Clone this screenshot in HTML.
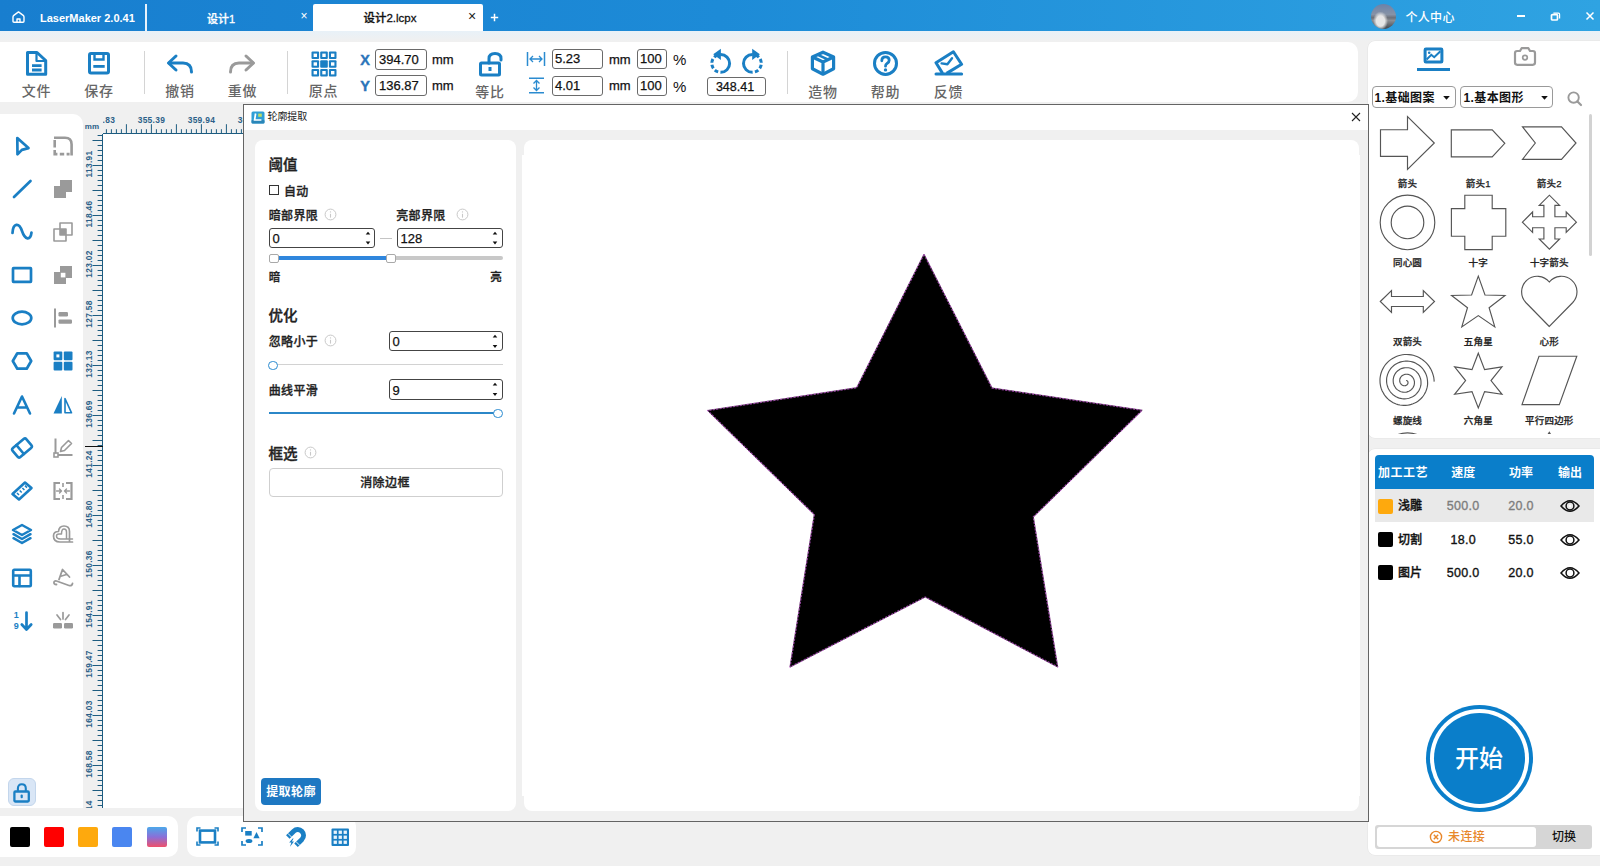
<!DOCTYPE html><html lang="zh"><head><meta charset="utf-8"><title>LaserMaker</title><style>
*{box-sizing:border-box;margin:0;padding:0}
html,body{width:1600px;height:866px;overflow:hidden;background:#f0f0f0;font-family:"Liberation Sans","Noto Sans CJK SC",sans-serif;color:#111}
.a{position:absolute;display:block}
.c{position:absolute;white-space:nowrap;transform:translate(-50%,-50%);line-height:1}
.l{position:absolute;white-space:nowrap;transform:translate(0,-50%);line-height:1}
.w{background:#fff}
.tl{font-size:14px;color:#666;letter-spacing:.7px;font-weight:500}
.inp{-webkit-text-stroke:.25px #111;position:absolute;border:1px solid #6a6a6a;border-radius:3px;background:#fff;font-size:13px;line-height:1;padding-left:3px;display:flex;align-items:center;color:#111}
.mm{font-size:13px;color:#111;-webkit-text-stroke:.25px #111}
.sb{font-size:12px;font-weight:bold;color:#111}
.shl{font-size:9.5px;font-weight:500;-webkit-text-stroke:.25px #222;color:#222;letter-spacing:.2px}
.th{font-size:12px;font-weight:bold;color:#fff}
.td{font-size:12px;font-weight:500;-webkit-text-stroke:.35px currentColor;color:#111}
.f12{font-size:12px;font-weight:500;-webkit-text-stroke:.3px #222;color:#222;letter-spacing:.3px}
.f14{font-size:14.5px;font-weight:500;-webkit-text-stroke:.35px #222;color:#222}
.rl{font-size:8.4px;font-weight:bold;color:#2b5f88;letter-spacing:.3px}
</style></head><body>
<div class="a" style="left:0;top:0;width:1600px;height:31px;background:linear-gradient(90deg,#187ecf 0%,#1d8bd7 45%,#2fa3e2 100%)"></div>
<div class="a" style="left:0;top:31px;width:1600px;height:10px;background:linear-gradient(180deg,#e8f1f8,#f0f0f0)"></div>
<svg class="a" style="left:11px;top:9px" width="15" height="15" viewBox="0 0 15 15" ><path d="M2 8 Q2 7 2.8 6.4 L7.5 2.9 L12.2 6.4 Q13 7 13 8 V12.2 Q13 13.2 12 13.2 H3 Q2 13.2 2 12.2 Z M6 13 V10 H9 V13" fill="none" stroke="#fff" stroke-width="1.4" stroke-linejoin="round"/></svg>
<span class="l " style="left:40px;top:18px;font-size:11px;color:#fff;font-weight:bold;letter-spacing:0">LaserMaker 2.0.41</span>
<div class="a" style="left:145px;top:4px;width:2px;height:27px;background:#e8f2fb"></div>
<span class="c " style="left:221px;top:18.6px;font-size:11px;color:#fff;font-weight:500;-webkit-text-stroke:.3px #fff">设计1</span>
<span class="c " style="left:304px;top:15.5px;font-size:12px;color:#fff">×</span>
<div class="a w" style="left:313px;top:4px;width:170px;height:27px;border-radius:2px 2px 0 0"></div>
<span class="c " style="left:390px;top:18.6px;font-size:11.5px;color:#111;font-weight:500;-webkit-text-stroke:.3px #111">设计2.lcpx</span>
<span class="c " style="left:472px;top:15.5px;font-size:14px;color:#222">×</span>
<svg class="a" style="left:489.5px;top:12.5px" width="9" height="9" viewBox="0 0 9 9" ><path d="M4.5 0.8 V8.2 M0.8 4.5 H8.2" stroke="#fff" stroke-width="1.5"/></svg>
<div class="a" style="left:1371px;top:4px;width:25px;height:25px;border-radius:13px;background:radial-gradient(ellipse 30% 38% at 38% 68%,#e6e6e6 0 55%,rgba(230,230,230,0) 100%),linear-gradient(180deg,#6b82aa 0%,#8793a6 42%,#6c7078 55%,#8a8e94 66%,#3f444b 100%)"></div>
<span class="l " style="left:1405.5px;top:17.8px;font-size:12px;color:#fff;font-weight:500;letter-spacing:.3px">个人中心</span>
<div class="a" style="left:1517.3px;top:15.3px;width:7.8px;height:1.6px;background:#fff"></div>
<svg class="a" style="left:1550px;top:11.5px" width="11" height="10" viewBox="0 0 11 10" ><rect x="1.5" y="2.6" width="6" height="5.4" rx="1" fill="none" stroke="#fff" stroke-width="1.7"/><path d="M3.4 1.2 H8.4 Q9.6 1.2 9.6 2.4 V6.6" fill="none" stroke="#fff" stroke-width="1.2"/></svg>
<svg class="a" style="left:1584.6px;top:11.4px" width="10" height="10" viewBox="0 0 10 10" ><path d="M1.5 1.5 L8.5 8.5 M8.5 1.5 L1.5 8.5" stroke="#fff" stroke-width="1.5"/></svg>
<div class="a w" style="left:-10px;top:42px;width:1368px;height:60px;border-radius:10px"></div>
<svg class="a" style="left:24px;top:49px" width="26" height="29" viewBox="0 0 26 29" ><path d="M3.5 3.5 H13 L21.7 11.5 V25.2 H3.5 Z" fill="none" stroke="#1a7fc4" stroke-width="3" stroke-linejoin="round"/><path d="M12.5 3.5 V12 H21.7" fill="none" stroke="#1a7fc4" stroke-width="2.2" stroke-linejoin="round"/><path d="M8 16.6 H17.6 M8 21 H17.6" stroke="#1a7fc4" stroke-width="2.8"/></svg>
<span class="c tl" style="left:36.5px;top:91.1px;">文件</span>
<svg class="a" style="left:86px;top:50px" width="26" height="27" viewBox="0 0 26 27" ><rect x="3.5" y="3.5" width="19" height="19.5" rx="1.5" fill="none" stroke="#1a7fc4" stroke-width="3"/><path d="M8.5 3.5 V9.5 H17.5 V3.5" fill="none" stroke="#1a7fc4" stroke-width="2.4"/><path d="M7.3 16.4 H18.7" stroke="#1a7fc4" stroke-width="2.8"/></svg>
<span class="c tl" style="left:99px;top:91.1px;">保存</span>
<div class="a" style="left:143.5px;top:51px;width:1.5px;height:43px;background:#d4d4d4"></div>
<svg class="a" style="left:165px;top:52px" width="30" height="24" viewBox="0 0 30 24" ><path d="M11 4 L3.5 11 L11 18" fill="none" stroke="#1a7fc4" stroke-width="3" stroke-linecap="round" stroke-linejoin="round"/><path d="M4 11 H18 Q26.5 11 26.5 20" fill="none" stroke="#1a7fc4" stroke-width="3" stroke-linecap="round"/></svg>
<span class="c tl" style="left:180px;top:91.1px;">撤销</span>
<svg class="a" style="left:227px;top:52px" width="30" height="24" viewBox="0 0 30 24" ><path d="M19 4 L26.5 11 L19 18" fill="none" stroke="#9a9a9a" stroke-width="3" stroke-linecap="round" stroke-linejoin="round"/><path d="M26 11 H12 Q3.5 11 3.5 20" fill="none" stroke="#9a9a9a" stroke-width="3" stroke-linecap="round"/></svg>
<span class="c tl" style="left:242.5px;top:91.1px;">重做</span>
<div class="a" style="left:286.5px;top:51px;width:1.5px;height:43px;background:#d4d4d4"></div>
<svg class="a" style="left:311px;top:50.6px" width="26" height="26" viewBox="0 0 26 26" ><rect x="0.50" y="0.50" width="7.6" height="7.6" rx="1" fill="#1a7fc4"/><rect x="2.60" y="2.60" width="3.4" height="3.4" fill="#fff"/><rect x="9.20" y="0.50" width="7.6" height="7.6" rx="1" fill="#1a7fc4"/><rect x="11.30" y="2.60" width="3.4" height="3.4" fill="#fff"/><rect x="17.90" y="0.50" width="7.6" height="7.6" rx="1" fill="#1a7fc4"/><rect x="20.00" y="2.60" width="3.4" height="3.4" fill="#fff"/><rect x="0.50" y="9.20" width="7.6" height="7.6" rx="1" fill="#1a7fc4"/><rect x="2.60" y="11.30" width="3.4" height="3.4" fill="#fff"/><rect x="9.20" y="9.20" width="7.6" height="7.6" rx="1" fill="#1a7fc4"/><rect x="17.90" y="9.20" width="7.6" height="7.6" rx="1" fill="#1a7fc4"/><rect x="20.00" y="11.30" width="3.4" height="3.4" fill="#fff"/><rect x="0.50" y="17.90" width="7.6" height="7.6" rx="1" fill="#1a7fc4"/><rect x="2.60" y="20.00" width="3.4" height="3.4" fill="#fff"/><rect x="9.20" y="17.90" width="7.6" height="7.6" rx="1" fill="#1a7fc4"/><rect x="11.30" y="20.00" width="3.4" height="3.4" fill="#fff"/><rect x="17.90" y="17.90" width="7.6" height="7.6" rx="1" fill="#1a7fc4"/><rect x="20.00" y="20.00" width="3.4" height="3.4" fill="#fff"/></svg>
<span class="c tl" style="left:323.5px;top:91.1px;">原点</span>
<span class="c " style="left:365px;top:60px;font-size:14.5px;font-weight:bold;color:#2b74b9;-webkit-text-stroke:.4px #2b74b9">X</span>
<span class="c " style="left:365px;top:86px;font-size:14.5px;font-weight:bold;color:#2b74b9;-webkit-text-stroke:.4px #2b74b9">Y</span>
<div class="inp" style="left:375px;top:49px;width:52px;height:21px">394.70</div>
<div class="inp" style="left:375px;top:75px;width:52px;height:21px">136.87</div>
<span class="l mm" style="left:432px;top:59.2px;">mm</span>
<span class="l mm" style="left:432px;top:85.2px;">mm</span>
<svg class="a" style="left:477px;top:50px" width="28" height="28" viewBox="0 0 28 28" ><rect x="3.5" y="13" width="19" height="12" rx="1" fill="none" stroke="#1a7fc4" stroke-width="3"/><path d="M12 13 V8.5 Q12 3.5 18 3.5 Q24 3.5 24 8.5 V10" fill="none" stroke="#1a7fc4" stroke-width="3" stroke-linecap="round"/><rect x="11.5" y="17" width="3" height="4" fill="#1a7fc4"/></svg>
<span class="c tl" style="left:490px;top:91.5px;">等比</span>
<svg class="a" style="left:526px;top:51px" width="20" height="16" viewBox="0 0 20 16" ><path d="M1.5 1 V15 M18.5 1 V15" stroke="#2b8bd0" stroke-width="1.5"/><path d="M4 8 H16 M7 5 L4 8 L7 11 M13 5 L16 8 L13 11" fill="none" stroke="#2b8bd0" stroke-width="1.3"/></svg>
<svg class="a" style="left:528px;top:77px" width="17" height="17" viewBox="0 0 17 17" ><path d="M1 1.2 H16 M1 15.8 H16" stroke="#2b8bd0" stroke-width="1.5"/><path d="M8.5 3.5 V13.5 M5.5 6.5 L8.5 3.5 L11.5 6.5 M5.5 10.5 L8.5 13.5 L11.5 10.5" fill="none" stroke="#2b8bd0" stroke-width="1.3"/></svg>
<div class="inp" style="left:552px;top:48.5px;width:51px;height:20.5px;padding-left:2px">5.23</div>
<div class="inp" style="left:552px;top:75.5px;width:51px;height:20.5px;padding-left:2px">4.01</div>
<span class="l mm" style="left:609px;top:59.2px;">mm</span>
<span class="l mm" style="left:609px;top:85.2px;">mm</span>
<div class="inp" style="left:637px;top:48.5px;width:30px;height:20.5px;padding-left:2px">100</div>
<div class="inp" style="left:637px;top:75.5px;width:30px;height:20.5px;padding-left:2px">100</div>
<span class="l " style="left:673px;top:59.3px;font-size:15px;color:#111">%</span>
<span class="l " style="left:673px;top:85.8px;font-size:15px;color:#111">%</span>
<svg class="a" style="left:708px;top:48px" width="26" height="28" viewBox="0 0 26 28" ><path d="M12.7 24.3 A8.9 8.9 0 0 0 12.7 6.5" fill="none" stroke="#1a7fc4" stroke-width="3"/><path d="M12.7 6.5 A8.9 8.9 0 0 0 12.7 24.3" fill="none" stroke="#1a7fc4" stroke-width="3" stroke-dasharray="3.8 2.2" stroke-dashoffset="-3.4"/><path d="M12.9 0.8 V11.9 L5.2 6.3 Z" fill="#1a7fc4"/></svg>
<svg class="a" style="left:739px;top:48px" width="26" height="28" viewBox="0 0 26 28" ><path d="M13.4 24.3 A8.9 8.9 0 0 1 13.4 6.5" fill="none" stroke="#1a7fc4" stroke-width="3"/><path d="M13.4 6.5 A8.9 8.9 0 0 1 13.4 24.3" fill="none" stroke="#1a7fc4" stroke-width="3" stroke-dasharray="3.8 2.2" stroke-dashoffset="-3.4"/><path d="M13.2 0.8 V11.9 L20.9 6.3 Z" fill="#1a7fc4"/></svg>
<div class="inp" style="left:707.3px;top:77px;width:58.5px;height:19px;justify-content:center;padding:1.5px 3px 0 0;font-size:12.5px">348.41</div>
<div class="a" style="left:786.6px;top:51px;width:1.5px;height:43px;background:#d4d4d4"></div>
<svg class="a" style="left:809px;top:49px" width="28" height="28" viewBox="0 0 28 28" ><path d="M14 3.2 L24.6 8 V19.8 L14 25.2 L3.4 19.8 V8 Z" fill="none" stroke="#1a7fc4" stroke-width="3.2" stroke-linejoin="round"/><path d="M3.4 8 L14 13 L24.6 8 M14 13 V25" fill="none" stroke="#1a7fc4" stroke-width="3.2" stroke-linejoin="round"/><path d="M8.3 5.6 L19.3 10.6" fill="none" stroke="#1a7fc4" stroke-width="2.6" /></svg>
<span class="c tl" style="left:823px;top:91.6px;">造物</span>
<svg class="a" style="left:872px;top:50px" width="27" height="27" viewBox="0 0 27 27" ><circle cx="13.5" cy="13.4" r="11" fill="none" stroke="#1a7fc4" stroke-width="3"/><path d="M9.8 10.8 Q9.8 6.8 13.5 6.8 Q17.2 6.8 17.2 10.3 Q17.2 12.3 15 13.5 Q13.5 14.4 13.5 16.2" fill="none" stroke="#1a7fc4" stroke-width="2.8" stroke-linecap="round"/><circle cx="13.5" cy="19.9" r="1.7" fill="#1a7fc4"/></svg>
<span class="c tl" style="left:885.5px;top:91.6px;">帮助</span>
<svg class="a" style="left:934px;top:49px" width="30" height="28" viewBox="0 0 30 28" ><path d="M8.6 24.4 L2 13.7 L19.4 2.8 L27.6 15.3 L12.6 24.4" fill="none" stroke="#1a7fc4" stroke-width="3" stroke-linejoin="round"/><path d="M7.6 14.4 L13.4 15.2 L18 9.2" fill="none" stroke="#1a7fc4" stroke-width="2.4" stroke-linecap="round" stroke-linejoin="round"/><path d="M2 24.9 H27.6" stroke="#1a7fc4" stroke-width="3" stroke-linecap="round"/></svg>
<span class="c tl" style="left:948.5px;top:91.6px;">反馈</span>
<div class="a w" style="left:-10px;top:114px;width:93px;height:694px;border-radius:0 10px 0 0"></div>
<svg class="a" style="left:9.5px;top:134.0px" width="24" height="24" viewBox="0 0 24 24" ><path d="M7.3 4.0 L18.5 14.1 L11.9 15.9 L7.5 20.4 Z" fill="none" stroke="#1a7fc4" stroke-linejoin="round" stroke-linecap="round" stroke-width="2.7"/></svg>
<svg class="a" style="left:9.5px;top:176.5px" width="24" height="24" viewBox="0 0 24 24" ><path d="M4 20 L20.5 4" fill="none" stroke="#1a7fc4" stroke-linejoin="round" stroke-linecap="round" stroke-width="2.7"/></svg>
<svg class="a" style="left:9.5px;top:220.0px" width="24" height="24" viewBox="0 0 24 24" ><path d="M2.5 13 C3 3 9 2 12 11 C15 20 20.5 21 21.5 12.5" fill="none" stroke="#1a7fc4" stroke-linejoin="round" stroke-linecap="round" stroke-width="2.7"/></svg>
<svg class="a" style="left:9.5px;top:263.0px" width="24" height="24" viewBox="0 0 24 24" ><rect x="3" y="5.2" width="18" height="13.6" rx="0.5" fill="none" stroke="#1a7fc4" stroke-linejoin="round" stroke-linecap="round" stroke-width="2.7"/></svg>
<svg class="a" style="left:9.5px;top:306.0px" width="24" height="24" viewBox="0 0 24 24" ><ellipse cx="12" cy="12" rx="9.3" ry="6.3" fill="none" stroke="#1a7fc4" stroke-linejoin="round" stroke-linecap="round" stroke-width="2.7"/></svg>
<svg class="a" style="left:9.5px;top:349.0px" width="24" height="24" viewBox="0 0 24 24" ><path d="M2.8 12 L7.3 4.3 H16.7 L21.2 12 L16.7 19.7 H7.3 Z" fill="none" stroke="#1a7fc4" stroke-linejoin="round" stroke-linecap="round" stroke-width="2.7"/></svg>
<svg class="a" style="left:9.5px;top:393.0px" width="24" height="24" viewBox="0 0 24 24" ><path d="M4 20.5 L12 3.5 L20 20.5 M7 14.5 H17" fill="none" stroke="#1a7fc4" stroke-linejoin="round" stroke-linecap="round" stroke-width="2.6"/></svg>
<svg class="a" style="left:9.5px;top:436.0px" width="24" height="24" viewBox="0 0 24 24" ><g transform="rotate(-40 12 12)"><rect x="3" y="6.2" width="18" height="11.6" rx="2" fill="none" stroke="#1a7fc4" stroke-linejoin="round" stroke-linecap="round" stroke-width="2.6"/><path d="M9.6 6.2 V17.8" fill="none" stroke="#1a7fc4" stroke-linejoin="round" stroke-linecap="round" stroke-width="2.6"/></g></svg>
<svg class="a" style="left:9.5px;top:479.0px" width="24" height="24" viewBox="0 0 24 24" ><path d="M2.5 15 L15 3.5 L21.5 9 L9 20.5 Z" fill="none" stroke="#1a7fc4" stroke-linejoin="round" stroke-linecap="round" stroke-width="2.6"/><path d="M7 14 L9 16 M9.7 11.5 L11.7 13.5 M12.4 9 L14.4 11 M15 6.6 L17 8.6" stroke="#1a7fc4" stroke-width="1.5"/></svg>
<svg class="a" style="left:9.5px;top:522.0px" width="24" height="24" viewBox="0 0 24 24" ><path d="M12 3 L21 8 L12 13 L3 8 Z" fill="none" stroke="#1a7fc4" stroke-linejoin="round" stroke-linecap="round" stroke-width="2.5"/><path d="M3.5 12.2 L12 17 L20.5 12.2 M3.5 16.2 L12 21 L20.5 16.2" fill="none" stroke="#1a7fc4" stroke-linejoin="round" stroke-linecap="round" stroke-width="2.5"/></svg>
<svg class="a" style="left:9.5px;top:565.5px" width="24" height="24" viewBox="0 0 24 24" ><rect x="3.2" y="3.8" width="17.6" height="16.4" rx="1" fill="none" stroke="#1a7fc4" stroke-linejoin="round" stroke-linecap="round" stroke-width="2.6"/><path d="M3.2 9.5 H20.8 M9.5 9.5 V20" fill="none" stroke="#1a7fc4" stroke-linejoin="round" stroke-linecap="round" stroke-width="2.6"/></svg>
<span class="c " style="left:16.3px;top:615.3px;font-size:9px;font-weight:bold;color:#1a7fc4">1</span>
<span class="c " style="left:16.3px;top:626.2px;font-size:9px;font-weight:bold;color:#1a7fc4">9</span>
<svg class="a" style="left:9.5px;top:609.0px" width="24" height="24" viewBox="0 0 24 24" ><path d="M16.5 3.5 V20 M11.8 15.5 L16.5 20.5 L21.2 15.5" fill="none" stroke="#1a7fc4" stroke-linejoin="round" stroke-linecap="round" stroke-width="2.7"/></svg>
<svg class="a" style="left:51.0px;top:134.0px" width="24" height="24" viewBox="0 0 24 24" ><path d="M3 3.8 H14 Q20.6 3.8 20.6 10.4 V21.4" fill="none" stroke="#9a9a9a" stroke-width="2.6"/><path d="M3.7 6.0 V20.1 H18.6" fill="none" stroke="#9a9a9a" stroke-width="2.6" stroke-dasharray="7.4 2.6 6.8 2.4 4.4 2.4 4.4 9"/></svg>
<svg class="a" style="left:51.0px;top:176.5px" width="24" height="24" viewBox="0 0 24 24" ><path d="M9 3 H21 V15 H15 V21 H3 V9 H9 Z" fill="#9a9a9a"/></svg>
<svg class="a" style="left:51.0px;top:220.0px" width="24" height="24" viewBox="0 0 24 24" ><rect x="9" y="3" width="12" height="12" fill="none" stroke="#9a9a9a" stroke-linejoin="round" stroke-linecap="round" stroke-width="1.6"/><rect x="3" y="9" width="12" height="12" fill="none" stroke="#9a9a9a" stroke-linejoin="round" stroke-linecap="round" stroke-width="1.6"/><rect x="9" y="9" width="6" height="6" fill="#9a9a9a"/></svg>
<svg class="a" style="left:51.0px;top:263.0px" width="24" height="24" viewBox="0 0 24 24" ><path d="M9 3 H21 V15 H15 V21 H3 V9 H9 Z" fill="#9a9a9a"/><rect x="9.8" y="9.8" width="4.6" height="4.6" fill="#fff"/></svg>
<svg class="a" style="left:51.0px;top:306.0px" width="24" height="24" viewBox="0 0 24 24" ><path d="M4 2.5 V21.5" stroke="#9a9a9a" stroke-width="2"/><rect x="7.5" y="6" width="9.5" height="4.4" rx="1.2" fill="#9a9a9a"/><rect x="7.5" y="13.4" width="13.5" height="4.4" rx="1.2" fill="#9a9a9a"/></svg>
<svg class="a" style="left:51.0px;top:349.0px" width="24" height="24" viewBox="0 0 24 24" ><rect x="2.6" y="2.6" width="8.7" height="8.7" rx="1" fill="#1a7fc4"/><rect x="5.4" y="5.4" width="3" height="3" fill="#fff"/><rect x="12.8" y="2.6" width="8.7" height="8.7" rx="1" fill="#1a7fc4"/><rect x="2.6" y="12.8" width="8.7" height="8.7" rx="1" fill="#1a7fc4"/><rect x="12.8" y="12.8" width="8.7" height="8.7" rx="1" fill="#1a7fc4"/></svg>
<svg class="a" style="left:51.0px;top:393.0px" width="24" height="24" viewBox="0 0 24 24" ><path d="M10.8 3 V20.5 H2.5 Z" fill="#1a7fc4"/><path d="M14 5.5 L20.5 19.8 H14 Z" fill="none" stroke="#1a7fc4" stroke-width="1.6" stroke-linejoin="round"/></svg>
<svg class="a" style="left:51.0px;top:436.0px" width="24" height="24" viewBox="0 0 24 24" ><path d="M4.5 2.5 V17.5" stroke="#9a9a9a" stroke-width="2"/><rect x="3" y="17" width="4" height="4" fill="none" stroke="#9a9a9a" stroke-width="1.6"/><path d="M7 19 H21.5" stroke="#9a9a9a" stroke-width="2"/><path d="M9.5 15.5 L10.5 11.5 L17.5 4.5 L20.5 7.5 L13.5 14.5 Z" fill="none" stroke="#9a9a9a" stroke-linejoin="round" stroke-linecap="round" stroke-width="1.6"/></svg>
<svg class="a" style="left:51.0px;top:479.0px" width="24" height="24" viewBox="0 0 24 24" ><path d="M9 4 H3.5 V20 H9 M15 4 H20.5 V20 H15" fill="none" stroke="#9a9a9a" stroke-width="2.2"/><path d="M5.5 12 H10.5 M8.5 10 L10.5 12 L8.5 14 M18.5 12 H13.5 M15.5 10 L13.5 12 L15.5 14" fill="none" stroke="#9a9a9a" stroke-linejoin="round" stroke-linecap="round" stroke-width="1.4"/><path d="M12 4 V8 M12 16 V20" stroke="#9a9a9a" stroke-width="1.6"/></svg>
<svg class="a" style="left:51.0px;top:522.0px" width="24" height="24" viewBox="0 0 24 24" ><path d="M21.5 20 H9 Q2.5 20 2.5 14 Q2.5 9.5 7.5 9.5 Q8 4 13 4 Q18.5 4 18.5 9.5 V20" fill="none" stroke="#9a9a9a" stroke-linejoin="round" stroke-linecap="round" stroke-width="1.7"/><path d="M21.5 17 H9.5 Q5.5 17 5.5 14 Q5.5 12 8 12 H10.5 Q10.5 7 13 7 Q15.5 7 15.5 10 V17" fill="none" stroke="#9a9a9a" stroke-linejoin="round" stroke-linecap="round" stroke-width="1.5"/></svg>
<svg class="a" style="left:51.0px;top:565.5px" width="24" height="24" viewBox="0 0 24 24" ><path d="M8 13.5 L11.5 3.5 L18.5 11 M9 10.5 L15.5 8.5" fill="none" stroke="#9a9a9a" stroke-linejoin="round" stroke-linecap="round" stroke-width="1.8"/><path d="M5.5 18.5 Q2.5 18.5 3 16 Q3.5 14.5 5.5 15 L18 19.5 Q21 20.3 21.5 17.5" fill="none" stroke="#9a9a9a" stroke-linejoin="round" stroke-linecap="round" stroke-width="1.8"/></svg>
<svg class="a" style="left:51.0px;top:609.0px" width="24" height="24" viewBox="0 0 24 24" ><rect x="2" y="14" width="9" height="5.5" rx="1.2" fill="#9a9a9a"/><rect x="13" y="14" width="9" height="5.5" rx="1.2" fill="#9a9a9a"/><path d="M12 3.5 V10 M6 6 L9.5 10.5 M18 6 L14.5 10.5" stroke="#9a9a9a" stroke-width="1.7" stroke-linecap="round"/></svg>
<div class="a" style="left:8px;top:778px;width:28px;height:28px;border-radius:6px;background:#d9e6f6;border:1px solid #c3d6ec"></div>
<svg class="a" style="left:12px;top:781px" width="20" height="24" viewBox="0 0 20 24" ><rect x="2.4" y="10.5" width="14.4" height="10" rx="1" fill="none" stroke="#1a7fc4" stroke-width="2.3"/><path d="M5.9 10.5 V7.6 Q5.9 3.3 9.8 3.3 Q13.8 3.3 13.8 7.6 V10.5" fill="none" stroke="#1a7fc4" stroke-width="2.1"/><rect x="8.6" y="13.6" width="2.2" height="3.6" rx="1" fill="#1a7fc4"/></svg>
<div class="a w" style="left:103px;top:133px;width:1265px;height:675px"></div>
<svg class="a" style="overflow:hidden;left:103px;top:114px" width="1265" height="20" viewBox="0 0 1265 20" ><path d="M3.4 15.2 V20" stroke="#1d5c80" stroke-width="1"/><path d="M8.4 15.2 V20" stroke="#1d5c80" stroke-width="1"/><path d="M13.4 15.2 V20" stroke="#1d5c80" stroke-width="1"/><path d="M18.4 15.2 V20" stroke="#1d5c80" stroke-width="1"/><path d="M23.4 10.2 V20" stroke="#1d5c80" stroke-width="1"/><path d="M28.4 15.2 V20" stroke="#1d5c80" stroke-width="1"/><path d="M33.4 15.2 V20" stroke="#1d5c80" stroke-width="1"/><path d="M38.4 15.2 V20" stroke="#1d5c80" stroke-width="1"/><path d="M43.4 15.2 V20" stroke="#1d5c80" stroke-width="1"/><path d="M48.4 10.2 V20" stroke="#1d5c80" stroke-width="1"/><path d="M53.4 15.2 V20" stroke="#1d5c80" stroke-width="1"/><path d="M58.4 15.2 V20" stroke="#1d5c80" stroke-width="1"/><path d="M63.4 15.2 V20" stroke="#1d5c80" stroke-width="1"/><path d="M68.4 15.2 V20" stroke="#1d5c80" stroke-width="1"/><path d="M73.4 10.2 V20" stroke="#1d5c80" stroke-width="1"/><path d="M78.4 15.2 V20" stroke="#1d5c80" stroke-width="1"/><path d="M83.4 15.2 V20" stroke="#1d5c80" stroke-width="1"/><path d="M88.4 15.2 V20" stroke="#1d5c80" stroke-width="1"/><path d="M93.4 15.2 V20" stroke="#1d5c80" stroke-width="1"/><path d="M98.4 10.2 V20" stroke="#1d5c80" stroke-width="1"/><path d="M103.4 15.2 V20" stroke="#1d5c80" stroke-width="1"/><path d="M108.4 15.2 V20" stroke="#1d5c80" stroke-width="1"/><path d="M113.4 15.2 V20" stroke="#1d5c80" stroke-width="1"/><path d="M118.4 15.2 V20" stroke="#1d5c80" stroke-width="1"/><path d="M123.4 10.2 V20" stroke="#1d5c80" stroke-width="1"/><path d="M128.4 15.2 V20" stroke="#1d5c80" stroke-width="1"/><path d="M133.4 15.2 V20" stroke="#1d5c80" stroke-width="1"/><path d="M138.4 15.2 V20" stroke="#1d5c80" stroke-width="1"/><path d="M143.4 15.2 V20" stroke="#1d5c80" stroke-width="1"/><path d="M148.4 10.2 V20" stroke="#1d5c80" stroke-width="1"/><path d="M153.4 15.2 V20" stroke="#1d5c80" stroke-width="1"/><path d="M158.4 15.2 V20" stroke="#1d5c80" stroke-width="1"/><path d="M163.4 15.2 V20" stroke="#1d5c80" stroke-width="1"/><path d="M168.4 15.2 V20" stroke="#1d5c80" stroke-width="1"/><path d="M173.4 10.2 V20" stroke="#1d5c80" stroke-width="1"/><path d="M178.4 15.2 V20" stroke="#1d5c80" stroke-width="1"/><path d="M183.4 15.2 V20" stroke="#1d5c80" stroke-width="1"/><path d="M188.4 15.2 V20" stroke="#1d5c80" stroke-width="1"/><path d="M193.4 15.2 V20" stroke="#1d5c80" stroke-width="1"/><path d="M198.4 10.2 V20" stroke="#1d5c80" stroke-width="1"/><path d="M203.4 15.2 V20" stroke="#1d5c80" stroke-width="1"/><path d="M208.4 15.2 V20" stroke="#1d5c80" stroke-width="1"/><path d="M213.4 15.2 V20" stroke="#1d5c80" stroke-width="1"/><path d="M218.4 15.2 V20" stroke="#1d5c80" stroke-width="1"/><path d="M223.4 10.2 V20" stroke="#1d5c80" stroke-width="1"/><path d="M228.4 15.2 V20" stroke="#1d5c80" stroke-width="1"/><path d="M233.4 15.2 V20" stroke="#1d5c80" stroke-width="1"/><path d="M238.4 15.2 V20" stroke="#1d5c80" stroke-width="1"/><path d="M243.4 15.2 V20" stroke="#1d5c80" stroke-width="1"/><path d="M248.4 10.2 V20" stroke="#1d5c80" stroke-width="1"/><path d="M253.4 15.2 V20" stroke="#1d5c80" stroke-width="1"/><path d="M258.4 15.2 V20" stroke="#1d5c80" stroke-width="1"/><path d="M263.4 15.2 V20" stroke="#1d5c80" stroke-width="1"/><path d="M268.4 15.2 V20" stroke="#1d5c80" stroke-width="1"/><path d="M273.4 10.2 V20" stroke="#1d5c80" stroke-width="1"/><path d="M278.4 15.2 V20" stroke="#1d5c80" stroke-width="1"/><path d="M283.4 15.2 V20" stroke="#1d5c80" stroke-width="1"/><path d="M288.4 15.2 V20" stroke="#1d5c80" stroke-width="1"/><path d="M293.4 15.2 V20" stroke="#1d5c80" stroke-width="1"/><path d="M298.4 10.2 V20" stroke="#1d5c80" stroke-width="1"/><path d="M303.4 15.2 V20" stroke="#1d5c80" stroke-width="1"/><path d="M308.4 15.2 V20" stroke="#1d5c80" stroke-width="1"/><path d="M313.4 15.2 V20" stroke="#1d5c80" stroke-width="1"/><path d="M318.4 15.2 V20" stroke="#1d5c80" stroke-width="1"/><path d="M323.4 10.2 V20" stroke="#1d5c80" stroke-width="1"/><path d="M328.4 15.2 V20" stroke="#1d5c80" stroke-width="1"/><path d="M333.4 15.2 V20" stroke="#1d5c80" stroke-width="1"/><path d="M338.4 15.2 V20" stroke="#1d5c80" stroke-width="1"/><path d="M343.4 15.2 V20" stroke="#1d5c80" stroke-width="1"/><path d="M348.4 10.2 V20" stroke="#1d5c80" stroke-width="1"/><path d="M353.4 15.2 V20" stroke="#1d5c80" stroke-width="1"/><path d="M358.4 15.2 V20" stroke="#1d5c80" stroke-width="1"/><path d="M363.4 15.2 V20" stroke="#1d5c80" stroke-width="1"/><path d="M368.4 15.2 V20" stroke="#1d5c80" stroke-width="1"/><path d="M373.4 10.2 V20" stroke="#1d5c80" stroke-width="1"/><path d="M378.4 15.2 V20" stroke="#1d5c80" stroke-width="1"/><path d="M383.4 15.2 V20" stroke="#1d5c80" stroke-width="1"/><path d="M388.4 15.2 V20" stroke="#1d5c80" stroke-width="1"/><path d="M393.4 15.2 V20" stroke="#1d5c80" stroke-width="1"/><path d="M398.4 10.2 V20" stroke="#1d5c80" stroke-width="1"/><path d="M403.4 15.2 V20" stroke="#1d5c80" stroke-width="1"/><path d="M408.4 15.2 V20" stroke="#1d5c80" stroke-width="1"/><path d="M413.4 15.2 V20" stroke="#1d5c80" stroke-width="1"/><path d="M418.4 15.2 V20" stroke="#1d5c80" stroke-width="1"/><path d="M423.4 10.2 V20" stroke="#1d5c80" stroke-width="1"/><path d="M428.4 15.2 V20" stroke="#1d5c80" stroke-width="1"/><path d="M433.4 15.2 V20" stroke="#1d5c80" stroke-width="1"/><path d="M438.4 15.2 V20" stroke="#1d5c80" stroke-width="1"/><path d="M443.4 15.2 V20" stroke="#1d5c80" stroke-width="1"/><path d="M448.4 10.2 V20" stroke="#1d5c80" stroke-width="1"/><path d="M453.4 15.2 V20" stroke="#1d5c80" stroke-width="1"/><path d="M458.4 15.2 V20" stroke="#1d5c80" stroke-width="1"/><path d="M463.4 15.2 V20" stroke="#1d5c80" stroke-width="1"/><path d="M468.4 15.2 V20" stroke="#1d5c80" stroke-width="1"/><path d="M473.4 10.2 V20" stroke="#1d5c80" stroke-width="1"/><path d="M478.4 15.2 V20" stroke="#1d5c80" stroke-width="1"/><path d="M483.4 15.2 V20" stroke="#1d5c80" stroke-width="1"/><path d="M488.4 15.2 V20" stroke="#1d5c80" stroke-width="1"/><path d="M493.4 15.2 V20" stroke="#1d5c80" stroke-width="1"/><path d="M498.4 10.2 V20" stroke="#1d5c80" stroke-width="1"/><path d="M503.4 15.2 V20" stroke="#1d5c80" stroke-width="1"/><path d="M508.4 15.2 V20" stroke="#1d5c80" stroke-width="1"/><path d="M513.4 15.2 V20" stroke="#1d5c80" stroke-width="1"/><path d="M518.4 15.2 V20" stroke="#1d5c80" stroke-width="1"/><path d="M523.4 10.2 V20" stroke="#1d5c80" stroke-width="1"/><path d="M528.4 15.2 V20" stroke="#1d5c80" stroke-width="1"/><path d="M533.4 15.2 V20" stroke="#1d5c80" stroke-width="1"/><path d="M538.4 15.2 V20" stroke="#1d5c80" stroke-width="1"/><path d="M543.4 15.2 V20" stroke="#1d5c80" stroke-width="1"/><path d="M548.4 10.2 V20" stroke="#1d5c80" stroke-width="1"/><path d="M553.4 15.2 V20" stroke="#1d5c80" stroke-width="1"/><path d="M558.4 15.2 V20" stroke="#1d5c80" stroke-width="1"/><path d="M563.4 15.2 V20" stroke="#1d5c80" stroke-width="1"/><path d="M568.4 15.2 V20" stroke="#1d5c80" stroke-width="1"/><path d="M573.4 10.2 V20" stroke="#1d5c80" stroke-width="1"/><path d="M578.4 15.2 V20" stroke="#1d5c80" stroke-width="1"/><path d="M583.4 15.2 V20" stroke="#1d5c80" stroke-width="1"/><path d="M588.4 15.2 V20" stroke="#1d5c80" stroke-width="1"/><path d="M593.4 15.2 V20" stroke="#1d5c80" stroke-width="1"/><path d="M598.4 10.2 V20" stroke="#1d5c80" stroke-width="1"/><path d="M603.4 15.2 V20" stroke="#1d5c80" stroke-width="1"/><path d="M608.4 15.2 V20" stroke="#1d5c80" stroke-width="1"/><path d="M613.4 15.2 V20" stroke="#1d5c80" stroke-width="1"/><path d="M618.4 15.2 V20" stroke="#1d5c80" stroke-width="1"/><path d="M623.4 10.2 V20" stroke="#1d5c80" stroke-width="1"/><path d="M628.4 15.2 V20" stroke="#1d5c80" stroke-width="1"/><path d="M633.4 15.2 V20" stroke="#1d5c80" stroke-width="1"/><path d="M638.4 15.2 V20" stroke="#1d5c80" stroke-width="1"/><path d="M643.4 15.2 V20" stroke="#1d5c80" stroke-width="1"/><path d="M648.4 10.2 V20" stroke="#1d5c80" stroke-width="1"/><path d="M653.4 15.2 V20" stroke="#1d5c80" stroke-width="1"/><path d="M658.4 15.2 V20" stroke="#1d5c80" stroke-width="1"/><path d="M663.4 15.2 V20" stroke="#1d5c80" stroke-width="1"/><path d="M668.4 15.2 V20" stroke="#1d5c80" stroke-width="1"/><path d="M673.4 10.2 V20" stroke="#1d5c80" stroke-width="1"/><path d="M678.4 15.2 V20" stroke="#1d5c80" stroke-width="1"/><path d="M683.4 15.2 V20" stroke="#1d5c80" stroke-width="1"/><path d="M688.4 15.2 V20" stroke="#1d5c80" stroke-width="1"/><path d="M693.4 15.2 V20" stroke="#1d5c80" stroke-width="1"/><path d="M698.4 10.2 V20" stroke="#1d5c80" stroke-width="1"/><path d="M703.4 15.2 V20" stroke="#1d5c80" stroke-width="1"/><path d="M708.4 15.2 V20" stroke="#1d5c80" stroke-width="1"/><path d="M713.4 15.2 V20" stroke="#1d5c80" stroke-width="1"/><path d="M718.4 15.2 V20" stroke="#1d5c80" stroke-width="1"/><path d="M723.4 10.2 V20" stroke="#1d5c80" stroke-width="1"/><path d="M728.4 15.2 V20" stroke="#1d5c80" stroke-width="1"/><path d="M733.4 15.2 V20" stroke="#1d5c80" stroke-width="1"/><path d="M738.4 15.2 V20" stroke="#1d5c80" stroke-width="1"/><path d="M743.4 15.2 V20" stroke="#1d5c80" stroke-width="1"/><path d="M748.4 10.2 V20" stroke="#1d5c80" stroke-width="1"/><path d="M753.4 15.2 V20" stroke="#1d5c80" stroke-width="1"/><path d="M758.4 15.2 V20" stroke="#1d5c80" stroke-width="1"/><path d="M763.4 15.2 V20" stroke="#1d5c80" stroke-width="1"/><path d="M768.4 15.2 V20" stroke="#1d5c80" stroke-width="1"/><path d="M773.4 10.2 V20" stroke="#1d5c80" stroke-width="1"/><path d="M778.4 15.2 V20" stroke="#1d5c80" stroke-width="1"/><path d="M783.4 15.2 V20" stroke="#1d5c80" stroke-width="1"/><path d="M788.4 15.2 V20" stroke="#1d5c80" stroke-width="1"/><path d="M793.4 15.2 V20" stroke="#1d5c80" stroke-width="1"/><path d="M798.4 10.2 V20" stroke="#1d5c80" stroke-width="1"/><path d="M803.4 15.2 V20" stroke="#1d5c80" stroke-width="1"/><path d="M808.4 15.2 V20" stroke="#1d5c80" stroke-width="1"/><path d="M813.4 15.2 V20" stroke="#1d5c80" stroke-width="1"/><path d="M818.4 15.2 V20" stroke="#1d5c80" stroke-width="1"/><path d="M823.4 10.2 V20" stroke="#1d5c80" stroke-width="1"/><path d="M828.4 15.2 V20" stroke="#1d5c80" stroke-width="1"/><path d="M833.4 15.2 V20" stroke="#1d5c80" stroke-width="1"/><path d="M838.4 15.2 V20" stroke="#1d5c80" stroke-width="1"/><path d="M843.4 15.2 V20" stroke="#1d5c80" stroke-width="1"/><path d="M848.4 10.2 V20" stroke="#1d5c80" stroke-width="1"/><path d="M853.4 15.2 V20" stroke="#1d5c80" stroke-width="1"/><path d="M858.4 15.2 V20" stroke="#1d5c80" stroke-width="1"/><path d="M863.4 15.2 V20" stroke="#1d5c80" stroke-width="1"/><path d="M868.4 15.2 V20" stroke="#1d5c80" stroke-width="1"/><path d="M873.4 10.2 V20" stroke="#1d5c80" stroke-width="1"/><path d="M878.4 15.2 V20" stroke="#1d5c80" stroke-width="1"/><path d="M883.4 15.2 V20" stroke="#1d5c80" stroke-width="1"/><path d="M888.4 15.2 V20" stroke="#1d5c80" stroke-width="1"/><path d="M893.4 15.2 V20" stroke="#1d5c80" stroke-width="1"/><path d="M898.4 10.2 V20" stroke="#1d5c80" stroke-width="1"/><path d="M903.4 15.2 V20" stroke="#1d5c80" stroke-width="1"/><path d="M908.4 15.2 V20" stroke="#1d5c80" stroke-width="1"/><path d="M913.4 15.2 V20" stroke="#1d5c80" stroke-width="1"/><path d="M918.4 15.2 V20" stroke="#1d5c80" stroke-width="1"/><path d="M923.4 10.2 V20" stroke="#1d5c80" stroke-width="1"/><path d="M928.4 15.2 V20" stroke="#1d5c80" stroke-width="1"/><path d="M933.4 15.2 V20" stroke="#1d5c80" stroke-width="1"/><path d="M938.4 15.2 V20" stroke="#1d5c80" stroke-width="1"/><path d="M943.4 15.2 V20" stroke="#1d5c80" stroke-width="1"/><path d="M948.4 10.2 V20" stroke="#1d5c80" stroke-width="1"/><path d="M953.4 15.2 V20" stroke="#1d5c80" stroke-width="1"/><path d="M958.4 15.2 V20" stroke="#1d5c80" stroke-width="1"/><path d="M963.4 15.2 V20" stroke="#1d5c80" stroke-width="1"/><path d="M968.4 15.2 V20" stroke="#1d5c80" stroke-width="1"/><path d="M973.4 10.2 V20" stroke="#1d5c80" stroke-width="1"/><path d="M978.4 15.2 V20" stroke="#1d5c80" stroke-width="1"/><path d="M983.4 15.2 V20" stroke="#1d5c80" stroke-width="1"/><path d="M988.4 15.2 V20" stroke="#1d5c80" stroke-width="1"/><path d="M993.4 15.2 V20" stroke="#1d5c80" stroke-width="1"/><path d="M998.4 10.2 V20" stroke="#1d5c80" stroke-width="1"/><path d="M1003.4 15.2 V20" stroke="#1d5c80" stroke-width="1"/><path d="M1008.4 15.2 V20" stroke="#1d5c80" stroke-width="1"/><path d="M1013.4 15.2 V20" stroke="#1d5c80" stroke-width="1"/><path d="M1018.4 15.2 V20" stroke="#1d5c80" stroke-width="1"/><path d="M1023.4 10.2 V20" stroke="#1d5c80" stroke-width="1"/><path d="M1028.4 15.2 V20" stroke="#1d5c80" stroke-width="1"/><path d="M1033.4 15.2 V20" stroke="#1d5c80" stroke-width="1"/><path d="M1038.4 15.2 V20" stroke="#1d5c80" stroke-width="1"/><path d="M1043.4 15.2 V20" stroke="#1d5c80" stroke-width="1"/><path d="M1048.4 10.2 V20" stroke="#1d5c80" stroke-width="1"/><path d="M1053.4 15.2 V20" stroke="#1d5c80" stroke-width="1"/><path d="M1058.4 15.2 V20" stroke="#1d5c80" stroke-width="1"/><path d="M1063.4 15.2 V20" stroke="#1d5c80" stroke-width="1"/><path d="M1068.4 15.2 V20" stroke="#1d5c80" stroke-width="1"/><path d="M1073.4 10.2 V20" stroke="#1d5c80" stroke-width="1"/><path d="M1078.4 15.2 V20" stroke="#1d5c80" stroke-width="1"/><path d="M1083.4 15.2 V20" stroke="#1d5c80" stroke-width="1"/><path d="M1088.4 15.2 V20" stroke="#1d5c80" stroke-width="1"/><path d="M1093.4 15.2 V20" stroke="#1d5c80" stroke-width="1"/><path d="M1098.4 10.2 V20" stroke="#1d5c80" stroke-width="1"/><path d="M1103.4 15.2 V20" stroke="#1d5c80" stroke-width="1"/><path d="M1108.4 15.2 V20" stroke="#1d5c80" stroke-width="1"/><path d="M1113.4 15.2 V20" stroke="#1d5c80" stroke-width="1"/><path d="M1118.4 15.2 V20" stroke="#1d5c80" stroke-width="1"/><path d="M1123.4 10.2 V20" stroke="#1d5c80" stroke-width="1"/><path d="M1128.4 15.2 V20" stroke="#1d5c80" stroke-width="1"/><path d="M1133.4 15.2 V20" stroke="#1d5c80" stroke-width="1"/><path d="M1138.4 15.2 V20" stroke="#1d5c80" stroke-width="1"/><path d="M1143.4 15.2 V20" stroke="#1d5c80" stroke-width="1"/><path d="M1148.4 10.2 V20" stroke="#1d5c80" stroke-width="1"/><path d="M1153.4 15.2 V20" stroke="#1d5c80" stroke-width="1"/><path d="M1158.4 15.2 V20" stroke="#1d5c80" stroke-width="1"/><path d="M1163.4 15.2 V20" stroke="#1d5c80" stroke-width="1"/><path d="M1168.4 15.2 V20" stroke="#1d5c80" stroke-width="1"/><path d="M1173.4 10.2 V20" stroke="#1d5c80" stroke-width="1"/><path d="M1178.4 15.2 V20" stroke="#1d5c80" stroke-width="1"/><path d="M1183.4 15.2 V20" stroke="#1d5c80" stroke-width="1"/><path d="M1188.4 15.2 V20" stroke="#1d5c80" stroke-width="1"/><path d="M1193.4 15.2 V20" stroke="#1d5c80" stroke-width="1"/><path d="M1198.4 10.2 V20" stroke="#1d5c80" stroke-width="1"/><path d="M1203.4 15.2 V20" stroke="#1d5c80" stroke-width="1"/><path d="M1208.4 15.2 V20" stroke="#1d5c80" stroke-width="1"/><path d="M1213.4 15.2 V20" stroke="#1d5c80" stroke-width="1"/><path d="M1218.4 15.2 V20" stroke="#1d5c80" stroke-width="1"/><path d="M1223.4 10.2 V20" stroke="#1d5c80" stroke-width="1"/><path d="M1228.4 15.2 V20" stroke="#1d5c80" stroke-width="1"/><path d="M1233.4 15.2 V20" stroke="#1d5c80" stroke-width="1"/><path d="M1238.4 15.2 V20" stroke="#1d5c80" stroke-width="1"/><path d="M1243.4 15.2 V20" stroke="#1d5c80" stroke-width="1"/><path d="M1248.4 10.2 V20" stroke="#1d5c80" stroke-width="1"/><path d="M1253.4 15.2 V20" stroke="#1d5c80" stroke-width="1"/><path d="M1258.4 15.2 V20" stroke="#1d5c80" stroke-width="1"/><path d="M1263.4 15.2 V20" stroke="#1d5c80" stroke-width="1"/><path d="M-1 19.5 H1265" stroke="#1d5c80" stroke-width="1"/></svg>
<div class="a" style="left:103px;top:114px;width:1265px;height:12px;overflow:hidden">
<span class="c rl" style="left:-1.6px;top:6px;">350.83</span>
<span class="c rl" style="left:48.4px;top:6px;">355.39</span>
<span class="c rl" style="left:98.4px;top:6px;">359.94</span>
<span class="c rl" style="left:148.4px;top:6px;">364.50</span>
<span class="c rl" style="left:198.4px;top:6px;">369.05</span>
<span class="c rl" style="left:248.4px;top:6px;">373.61</span>
<span class="c rl" style="left:298.4px;top:6px;">378.17</span>
<span class="c rl" style="left:348.4px;top:6px;">382.72</span>
<span class="c rl" style="left:398.4px;top:6px;">387.28</span>
<span class="c rl" style="left:448.4px;top:6px;">391.83</span>
<span class="c rl" style="left:498.4px;top:6px;">396.39</span>
<span class="c rl" style="left:548.4px;top:6px;">400.95</span>
<span class="c rl" style="left:598.4px;top:6px;">405.50</span>
<span class="c rl" style="left:648.4px;top:6px;">410.06</span>
<span class="c rl" style="left:698.4px;top:6px;">414.61</span>
<span class="c rl" style="left:748.4px;top:6px;">419.17</span>
<span class="c rl" style="left:798.4px;top:6px;">423.73</span>
<span class="c rl" style="left:848.4px;top:6px;">428.28</span>
<span class="c rl" style="left:898.4px;top:6px;">432.84</span>
<span class="c rl" style="left:948.4px;top:6px;">437.39</span>
<span class="c rl" style="left:998.4px;top:6px;">441.95</span>
<span class="c rl" style="left:1048.4px;top:6px;">446.51</span>
<span class="c rl" style="left:1098.4px;top:6px;">451.06</span>
<span class="c rl" style="left:1148.4px;top:6px;">455.62</span>
<span class="c rl" style="left:1198.4px;top:6px;">460.17</span>
<span class="c rl" style="left:1248.4px;top:6px;">464.73</span>
</div>
<span class="l rl" style="left:84.8px;top:126.7px;font-size:8px;letter-spacing:0">mm</span>
<svg class="a" style="left:83px;top:134px" width="20" height="674" viewBox="0 0 20 674" ><path d="M14.6 1.5 H20" stroke="#1d5c80" stroke-width="1"/><path d="M9.5 6.5 H20" stroke="#1d5c80" stroke-width="1"/><path d="M14.6 11.5 H20" stroke="#1d5c80" stroke-width="1"/><path d="M14.6 16.5 H20" stroke="#1d5c80" stroke-width="1"/><path d="M14.6 21.5 H20" stroke="#1d5c80" stroke-width="1"/><path d="M14.6 26.5 H20" stroke="#1d5c80" stroke-width="1"/><path d="M9.5 31.5 H20" stroke="#1d5c80" stroke-width="1"/><path d="M14.6 36.5 H20" stroke="#1d5c80" stroke-width="1"/><path d="M14.6 41.5 H20" stroke="#1d5c80" stroke-width="1"/><path d="M14.6 46.5 H20" stroke="#1d5c80" stroke-width="1"/><path d="M14.6 51.5 H20" stroke="#1d5c80" stroke-width="1"/><path d="M9.5 56.5 H20" stroke="#1d5c80" stroke-width="1"/><path d="M14.6 61.5 H20" stroke="#1d5c80" stroke-width="1"/><path d="M14.6 66.5 H20" stroke="#1d5c80" stroke-width="1"/><path d="M14.6 71.5 H20" stroke="#1d5c80" stroke-width="1"/><path d="M14.6 76.5 H20" stroke="#1d5c80" stroke-width="1"/><path d="M9.5 81.5 H20" stroke="#1d5c80" stroke-width="1"/><path d="M14.6 86.5 H20" stroke="#1d5c80" stroke-width="1"/><path d="M14.6 91.5 H20" stroke="#1d5c80" stroke-width="1"/><path d="M14.6 96.5 H20" stroke="#1d5c80" stroke-width="1"/><path d="M14.6 101.5 H20" stroke="#1d5c80" stroke-width="1"/><path d="M9.5 106.5 H20" stroke="#1d5c80" stroke-width="1"/><path d="M14.6 111.5 H20" stroke="#1d5c80" stroke-width="1"/><path d="M14.6 116.5 H20" stroke="#1d5c80" stroke-width="1"/><path d="M14.6 121.5 H20" stroke="#1d5c80" stroke-width="1"/><path d="M14.6 126.5 H20" stroke="#1d5c80" stroke-width="1"/><path d="M9.5 131.5 H20" stroke="#1d5c80" stroke-width="1"/><path d="M14.6 136.5 H20" stroke="#1d5c80" stroke-width="1"/><path d="M14.6 141.5 H20" stroke="#1d5c80" stroke-width="1"/><path d="M14.6 146.5 H20" stroke="#1d5c80" stroke-width="1"/><path d="M14.6 151.5 H20" stroke="#1d5c80" stroke-width="1"/><path d="M9.5 156.5 H20" stroke="#1d5c80" stroke-width="1"/><path d="M14.6 161.5 H20" stroke="#1d5c80" stroke-width="1"/><path d="M14.6 166.5 H20" stroke="#1d5c80" stroke-width="1"/><path d="M14.6 171.5 H20" stroke="#1d5c80" stroke-width="1"/><path d="M14.6 176.5 H20" stroke="#1d5c80" stroke-width="1"/><path d="M9.5 181.5 H20" stroke="#1d5c80" stroke-width="1"/><path d="M14.6 186.5 H20" stroke="#1d5c80" stroke-width="1"/><path d="M14.6 191.5 H20" stroke="#1d5c80" stroke-width="1"/><path d="M14.6 196.5 H20" stroke="#1d5c80" stroke-width="1"/><path d="M14.6 201.5 H20" stroke="#1d5c80" stroke-width="1"/><path d="M9.5 206.5 H20" stroke="#1d5c80" stroke-width="1"/><path d="M14.6 211.5 H20" stroke="#1d5c80" stroke-width="1"/><path d="M14.6 216.5 H20" stroke="#1d5c80" stroke-width="1"/><path d="M14.6 221.5 H20" stroke="#1d5c80" stroke-width="1"/><path d="M14.6 226.5 H20" stroke="#1d5c80" stroke-width="1"/><path d="M9.5 231.5 H20" stroke="#1d5c80" stroke-width="1"/><path d="M14.6 236.5 H20" stroke="#1d5c80" stroke-width="1"/><path d="M14.6 241.5 H20" stroke="#1d5c80" stroke-width="1"/><path d="M14.6 246.5 H20" stroke="#1d5c80" stroke-width="1"/><path d="M14.6 251.5 H20" stroke="#1d5c80" stroke-width="1"/><path d="M9.5 256.5 H20" stroke="#1d5c80" stroke-width="1"/><path d="M14.6 261.5 H20" stroke="#1d5c80" stroke-width="1"/><path d="M14.6 266.5 H20" stroke="#1d5c80" stroke-width="1"/><path d="M14.6 271.5 H20" stroke="#1d5c80" stroke-width="1"/><path d="M14.6 276.5 H20" stroke="#1d5c80" stroke-width="1"/><path d="M9.5 281.5 H20" stroke="#1d5c80" stroke-width="1"/><path d="M14.6 286.5 H20" stroke="#1d5c80" stroke-width="1"/><path d="M14.6 291.5 H20" stroke="#1d5c80" stroke-width="1"/><path d="M14.6 296.5 H20" stroke="#1d5c80" stroke-width="1"/><path d="M14.6 301.5 H20" stroke="#1d5c80" stroke-width="1"/><path d="M9.5 306.5 H20" stroke="#1d5c80" stroke-width="1"/><path d="M14.6 311.5 H20" stroke="#1d5c80" stroke-width="1"/><path d="M14.6 316.5 H20" stroke="#1d5c80" stroke-width="1"/><path d="M14.6 321.5 H20" stroke="#1d5c80" stroke-width="1"/><path d="M14.6 326.5 H20" stroke="#1d5c80" stroke-width="1"/><path d="M9.5 331.5 H20" stroke="#1d5c80" stroke-width="1"/><path d="M14.6 336.5 H20" stroke="#1d5c80" stroke-width="1"/><path d="M14.6 341.5 H20" stroke="#1d5c80" stroke-width="1"/><path d="M14.6 346.5 H20" stroke="#1d5c80" stroke-width="1"/><path d="M14.6 351.5 H20" stroke="#1d5c80" stroke-width="1"/><path d="M9.5 356.5 H20" stroke="#1d5c80" stroke-width="1"/><path d="M14.6 361.5 H20" stroke="#1d5c80" stroke-width="1"/><path d="M14.6 366.5 H20" stroke="#1d5c80" stroke-width="1"/><path d="M14.6 371.5 H20" stroke="#1d5c80" stroke-width="1"/><path d="M14.6 376.5 H20" stroke="#1d5c80" stroke-width="1"/><path d="M9.5 381.5 H20" stroke="#1d5c80" stroke-width="1"/><path d="M14.6 386.5 H20" stroke="#1d5c80" stroke-width="1"/><path d="M14.6 391.5 H20" stroke="#1d5c80" stroke-width="1"/><path d="M14.6 396.5 H20" stroke="#1d5c80" stroke-width="1"/><path d="M14.6 401.5 H20" stroke="#1d5c80" stroke-width="1"/><path d="M9.5 406.5 H20" stroke="#1d5c80" stroke-width="1"/><path d="M14.6 411.5 H20" stroke="#1d5c80" stroke-width="1"/><path d="M14.6 416.5 H20" stroke="#1d5c80" stroke-width="1"/><path d="M14.6 421.5 H20" stroke="#1d5c80" stroke-width="1"/><path d="M14.6 426.5 H20" stroke="#1d5c80" stroke-width="1"/><path d="M9.5 431.5 H20" stroke="#1d5c80" stroke-width="1"/><path d="M14.6 436.5 H20" stroke="#1d5c80" stroke-width="1"/><path d="M14.6 441.5 H20" stroke="#1d5c80" stroke-width="1"/><path d="M14.6 446.5 H20" stroke="#1d5c80" stroke-width="1"/><path d="M14.6 451.5 H20" stroke="#1d5c80" stroke-width="1"/><path d="M9.5 456.5 H20" stroke="#1d5c80" stroke-width="1"/><path d="M14.6 461.5 H20" stroke="#1d5c80" stroke-width="1"/><path d="M14.6 466.5 H20" stroke="#1d5c80" stroke-width="1"/><path d="M14.6 471.5 H20" stroke="#1d5c80" stroke-width="1"/><path d="M14.6 476.5 H20" stroke="#1d5c80" stroke-width="1"/><path d="M9.5 481.5 H20" stroke="#1d5c80" stroke-width="1"/><path d="M14.6 486.5 H20" stroke="#1d5c80" stroke-width="1"/><path d="M14.6 491.5 H20" stroke="#1d5c80" stroke-width="1"/><path d="M14.6 496.5 H20" stroke="#1d5c80" stroke-width="1"/><path d="M14.6 501.5 H20" stroke="#1d5c80" stroke-width="1"/><path d="M9.5 506.5 H20" stroke="#1d5c80" stroke-width="1"/><path d="M14.6 511.5 H20" stroke="#1d5c80" stroke-width="1"/><path d="M14.6 516.5 H20" stroke="#1d5c80" stroke-width="1"/><path d="M14.6 521.5 H20" stroke="#1d5c80" stroke-width="1"/><path d="M14.6 526.5 H20" stroke="#1d5c80" stroke-width="1"/><path d="M9.5 531.5 H20" stroke="#1d5c80" stroke-width="1"/><path d="M14.6 536.5 H20" stroke="#1d5c80" stroke-width="1"/><path d="M14.6 541.5 H20" stroke="#1d5c80" stroke-width="1"/><path d="M14.6 546.5 H20" stroke="#1d5c80" stroke-width="1"/><path d="M14.6 551.5 H20" stroke="#1d5c80" stroke-width="1"/><path d="M9.5 556.5 H20" stroke="#1d5c80" stroke-width="1"/><path d="M14.6 561.5 H20" stroke="#1d5c80" stroke-width="1"/><path d="M14.6 566.5 H20" stroke="#1d5c80" stroke-width="1"/><path d="M14.6 571.5 H20" stroke="#1d5c80" stroke-width="1"/><path d="M14.6 576.5 H20" stroke="#1d5c80" stroke-width="1"/><path d="M9.5 581.5 H20" stroke="#1d5c80" stroke-width="1"/><path d="M14.6 586.5 H20" stroke="#1d5c80" stroke-width="1"/><path d="M14.6 591.5 H20" stroke="#1d5c80" stroke-width="1"/><path d="M14.6 596.5 H20" stroke="#1d5c80" stroke-width="1"/><path d="M14.6 601.5 H20" stroke="#1d5c80" stroke-width="1"/><path d="M9.5 606.5 H20" stroke="#1d5c80" stroke-width="1"/><path d="M14.6 611.5 H20" stroke="#1d5c80" stroke-width="1"/><path d="M14.6 616.5 H20" stroke="#1d5c80" stroke-width="1"/><path d="M14.6 621.5 H20" stroke="#1d5c80" stroke-width="1"/><path d="M14.6 626.5 H20" stroke="#1d5c80" stroke-width="1"/><path d="M9.5 631.5 H20" stroke="#1d5c80" stroke-width="1"/><path d="M14.6 636.5 H20" stroke="#1d5c80" stroke-width="1"/><path d="M14.6 641.5 H20" stroke="#1d5c80" stroke-width="1"/><path d="M14.6 646.5 H20" stroke="#1d5c80" stroke-width="1"/><path d="M14.6 651.5 H20" stroke="#1d5c80" stroke-width="1"/><path d="M9.5 656.5 H20" stroke="#1d5c80" stroke-width="1"/><path d="M14.6 661.5 H20" stroke="#1d5c80" stroke-width="1"/><path d="M14.6 666.5 H20" stroke="#1d5c80" stroke-width="1"/><path d="M14.6 671.5 H20" stroke="#1d5c80" stroke-width="1"/><path d="M19.5 -1 V674" stroke="#1d5c80" stroke-width="1"/></svg>
<div class="a" style="left:83px;top:134px;width:14px;height:674px;overflow:hidden">
<span class="c rl" style="left:6px;top:29.9px;transform:translate(-50%,-50%) rotate(-90deg)">113.91</span>
<span class="c rl" style="left:6px;top:79.9px;transform:translate(-50%,-50%) rotate(-90deg)">118.46</span>
<span class="c rl" style="left:6px;top:129.9px;transform:translate(-50%,-50%) rotate(-90deg)">123.02</span>
<span class="c rl" style="left:6px;top:179.9px;transform:translate(-50%,-50%) rotate(-90deg)">127.58</span>
<span class="c rl" style="left:6px;top:229.9px;transform:translate(-50%,-50%) rotate(-90deg)">132.13</span>
<span class="c rl" style="left:6px;top:279.9px;transform:translate(-50%,-50%) rotate(-90deg)">136.69</span>
<span class="c rl" style="left:6px;top:329.9px;transform:translate(-50%,-50%) rotate(-90deg)">141.24</span>
<span class="c rl" style="left:6px;top:379.9px;transform:translate(-50%,-50%) rotate(-90deg)">145.80</span>
<span class="c rl" style="left:6px;top:429.9px;transform:translate(-50%,-50%) rotate(-90deg)">150.36</span>
<span class="c rl" style="left:6px;top:479.9px;transform:translate(-50%,-50%) rotate(-90deg)">154.91</span>
<span class="c rl" style="left:6px;top:529.9px;transform:translate(-50%,-50%) rotate(-90deg)">159.47</span>
<span class="c rl" style="left:6px;top:579.9px;transform:translate(-50%,-50%) rotate(-90deg)">164.03</span>
<span class="c rl" style="left:6px;top:629.9px;transform:translate(-50%,-50%) rotate(-90deg)">168.58</span>
<span class="c rl" style="left:6px;top:679.9px;transform:translate(-50%,-50%) rotate(-90deg)">173.14</span>
</div>
<div class="a" style="left:85px;top:445.5px;width:18px;height:1px;background:#111"></div>
<div class="a w" style="left:-10px;top:816px;width:188px;height:41px;border-radius:10px"></div>
<div class="a" style="left:10.0px;top:827px;width:20px;height:20px;border-radius:2px;background:#000"></div>
<div class="a" style="left:44.1px;top:827px;width:20px;height:20px;border-radius:2px;background:#f00"></div>
<div class="a" style="left:78.2px;top:827px;width:20px;height:20px;border-radius:2px;background:#fea90d"></div>
<div class="a" style="left:112.3px;top:827px;width:20px;height:20px;border-radius:2px;background:#4a86f0"></div>
<div class="a" style="left:146.5px;top:827px;width:20px;height:20px;border-radius:2px;background:linear-gradient(180deg,#4ca8ea 0%,#8a6fd8 50%,#f0506a 100%)"></div>
<div class="a w" style="left:187px;top:816px;width:169px;height:41px;border-radius:10px"></div>
<svg class="a" style="left:196px;top:827px" width="23" height="19" viewBox="0 0 23 19" ><rect x="4" y="3.6" width="15" height="11.8" fill="none" stroke="#1a7fc4" stroke-width="2.6"/><path d="M1 4.5 V1 H4.5 M18.5 1 H22 V4.5 M22 14.5 V18 H18.5 M4.5 18 H1 V14.5" fill="none" stroke="#1a7fc4" stroke-width="1.6"/></svg>
<svg class="a" style="left:241px;top:827px" width="22" height="19" viewBox="0 0 22 19" ><path d="M1 5 V1 H5 M17 1 H21 V5 M21 14 V18 H17 M5 18 H1 V14" fill="none" stroke="#1a7fc4" stroke-width="1.7" stroke-dasharray="0"/><rect x="4.2" y="4" width="6.5" height="4.6" fill="#1a7fc4"/><path d="M15.5 5 L18.6 11.2 H12.4 Z" fill="#1a7fc4"/><ellipse cx="8" cy="14" rx="3.4" ry="2" fill="#1a7fc4"/></svg>
<svg class="a" style="left:285px;top:826px" width="23" height="22" viewBox="0 0 23 22" ><path d="M2.83 11.07 L8.7 5.2 A5.8 5.8 0 0 1 16.9 13.4 L11.03 19.27" fill="none" stroke="#1a7fc4" stroke-width="5" stroke-linecap="butt"/><path d="M2.9 7.4 L6.6 11.1 M11 15.6 L14.7 19.3" stroke="#fff" stroke-width="0.9"/><path d="M7.6 12.6 L4.2 16.6 H6.4 L5 20.8 L9 15.4 H6.8 L8.6 12.6 Z" fill="#1a7fc4"/></svg>
<svg class="a" style="left:330.7px;top:827.6px" width="19" height="19" viewBox="0 0 19 19" ><rect x="0.5" y="0.5" width="17.5" height="17.5" rx="1" fill="#1a7fc4"/><rect x="2.6" y="2.6" width="3.3" height="3.3" fill="#e8f3fb"/><rect x="7.6" y="2.6" width="3.3" height="3.3" fill="#e8f3fb"/><rect x="12.6" y="2.6" width="3.3" height="3.3" fill="#e8f3fb"/><rect x="2.6" y="7.6" width="3.3" height="3.3" fill="#e8f3fb"/><rect x="7.6" y="7.6" width="3.3" height="3.3" fill="#e8f3fb"/><rect x="12.6" y="7.6" width="3.3" height="3.3" fill="#e8f3fb"/><rect x="2.6" y="12.6" width="3.3" height="3.3" fill="#e8f3fb"/><rect x="7.6" y="12.6" width="3.3" height="3.3" fill="#e8f3fb"/><rect x="12.6" y="12.6" width="3.3" height="3.3" fill="#e8f3fb"/></svg>
<div class="a w" style="left:1368px;top:40.5px;width:242px;height:397.3px;border-radius:7px 0 0 7px;box-shadow:0 0 0 .6px #e4e4e4"></div>
<div class="a w" style="left:1368px;top:448.6px;width:242px;height:406.4px;border-radius:7px 0 0 7px;box-shadow:0 0 0 .6px #e4e4e4"></div>
<svg class="a" style="left:1422px;top:46.4px" width="23" height="20" viewBox="0 0 23 20" ><rect x="3.1" y="3.1" width="16.8" height="13" rx="0.8" fill="none" stroke="#1a7fc4" stroke-width="3"/><path d="M4.6 13.4 L9.3 8.8 L12.2 11.2 L18.4 5.2" fill="none" stroke="#1a7fc4" stroke-width="2.1"/><circle cx="7.2" cy="6.7" r="1.3" fill="#1a7fc4"/></svg>
<div class="a" style="left:1417px;top:68px;width:33px;height:3px;background:#1a7fc4"></div>
<svg class="a" style="left:1512px;top:45px" width="26" height="23" viewBox="0 0 26 23" ><path d="M3 8.2 Q3 6 5.2 6 H8 L9.6 3.2 H16.4 L18 6 H20.8 Q23 6 23 8.2 V17.6 Q23 19.8 20.8 19.8 H5.2 Q3 19.8 3 17.6 Z" fill="none" stroke="#9a9a9a" stroke-width="2.2" stroke-linejoin="round"/><circle cx="13" cy="12.6" r="2.3" fill="none" stroke="#9a9a9a" stroke-width="1.7"/></svg>
<div class="a w" style="left:1371.5px;top:86px;width:84px;height:22px;border:1px solid #9a9a9a;border-radius:4px"></div>
<span class="l sb" style="left:1374.5px;top:97.5px;letter-spacing:.4px">1.基础图案</span>
<svg class="a" style="left:1442.3px;top:94.8px" width="9" height="6" viewBox="0 0 9 6" ><path d="M1.2 1 H7.8 L4.5 4.8 Z" fill="#111"/></svg>
<div class="a w" style="left:1460px;top:86px;width:93px;height:22px;border:1px solid #9a9a9a;border-radius:4px"></div>
<span class="l sb" style="left:1463.5px;top:97.5px;letter-spacing:.4px">1.基本图形</span>
<svg class="a" style="left:1540.3px;top:94.8px" width="9" height="6" viewBox="0 0 9 6" ><path d="M1.2 1 H7.8 L4.5 4.8 Z" fill="#111"/></svg>
<svg class="a" style="left:1566px;top:89.5px" width="17" height="17" viewBox="0 0 17 17" ><circle cx="7.6" cy="7.6" r="5.2" fill="none" stroke="#9a9a9a" stroke-width="1.9"/><path d="M11.5 11.5 L15 15" stroke="#9a9a9a" stroke-width="2.2" stroke-linecap="round"/></svg>
<div class="a" style="left:1588.5px;top:114px;width:3.5px;height:142px;border-radius:2px;background:#d2d2d2"></div>
<svg class="a" style="overflow:hidden;left:1369px;top:110px" width="231" height="324" viewBox="0 0 231 324" ><path d="M11.5 19.7 L38.5 19.7 L38.5 6.6 L65.3 33.0 L38.5 59.4 L38.5 46.4 L11.5 46.4 Z" fill="none" stroke="#555" stroke-width="1.15" stroke-linejoin="miter"/><path d="M82.3 19.8 L123.2 19.8 L135.8 33.3 L123.2 46.8 L82.3 46.8 Z" fill="none" stroke="#555" stroke-width="1.15" stroke-linejoin="miter"/><path d="M153.5 16.8 L192.5 16.8 L207.0 33.0 L192.5 49.3 L153.5 49.3 L166.3 33.0 Z" fill="none" stroke="#555" stroke-width="1.15" stroke-linejoin="miter"/><circle cx="38.5" cy="112.4" r="27.3" fill="none" stroke="#555" stroke-width="1.15" stroke-linejoin="miter"/><circle cx="38.5" cy="112.4" r="16.3" fill="none" stroke="#555" stroke-width="1.15" stroke-linejoin="miter"/><path d="M95.8 85.2 L123.2 85.2 L123.2 98.6 L136.8 98.6 L136.8 126.2 L123.2 126.2 L123.2 139.6 L95.8 139.6 L95.8 126.2 L82.4 126.2 L82.4 98.6 L95.8 98.6 Z" fill="none" stroke="#555" stroke-width="1.15" stroke-linejoin="miter"/><path d="M174.9 106.7 L174.9 95.4 L170.2 95.4 L180.4 85.2 L190.6 95.4 L185.9 95.4 L185.9 106.7 L185.9 106.7 L197.2 106.7 L197.2 102.0 L207.4 112.2 L197.2 122.4 L197.2 117.7 L185.9 117.7 L185.9 117.7 L185.9 129.0 L190.6 129.0 L180.4 139.2 L170.2 129.0 L174.9 129.0 L174.9 117.7 L174.9 117.7 L163.6 117.7 L163.6 122.4 L153.4 112.2 L163.6 102.0 L163.6 106.7 L174.9 106.7 Z" fill="none" stroke="#555" stroke-width="1.15" stroke-linejoin="miter"/><path d="M11.3 191.5 L22.5 180.5 L22.5 186.5 L54.3 186.5 L54.3 180.5 L65.5 191.5 L54.3 202.5 L54.3 196.5 L22.5 196.5 L22.5 202.5 Z" fill="none" stroke="#555" stroke-width="1.15" stroke-linejoin="miter"/><path d="M109.3 166.1 L116.0 185.0 L136.0 185.5 L120.1 197.7 L125.8 216.9 L109.3 205.6 L92.8 216.9 L98.5 197.7 L82.6 185.5 L102.6 185.0 Z" fill="none" stroke="#555" stroke-width="1.15" stroke-linejoin="miter"/><path d="M180.3 216.5 L156.8 192.5 A15.6 15.6 0 1 1 180.3 172.0 A15.6 15.6 0 1 1 203.8 192.5 Z" fill="none" stroke="#555" stroke-width="1.15" stroke-linejoin="miter"/><path d="M65.2 271.6 L65.0 269.3 L64.7 267.0 L64.1 264.8 L63.4 262.7 L62.5 260.6 L61.5 258.6 L60.3 256.6 L59.0 254.8 L57.5 253.1 L55.9 251.6 L54.2 250.2 L52.4 248.9 L50.5 247.7 L48.5 246.8 L46.4 246.0 L44.3 245.3 L42.2 244.9 L40.0 244.6 L37.8 244.5 L35.7 244.5 L33.5 244.8 L31.4 245.2 L29.3 245.7 L27.3 246.5 L25.4 247.4 L23.5 248.4 L21.7 249.6 L20.1 250.9 L18.5 252.3 L17.1 253.9 L15.8 255.5 L14.7 257.3 L13.7 259.1 L12.8 261.0 L12.1 263.0 L11.6 264.9 L11.2 267.0 L11.0 269.0 L11.0 271.1 L11.1 273.1 L11.4 275.1 L11.8 277.1 L12.4 279.0 L13.2 280.9 L14.1 282.6 L15.1 284.4 L16.2 286.0 L17.5 287.5 L18.9 288.9 L20.4 290.2 L22.0 291.3 L23.7 292.4 L25.4 293.2 L27.2 294.0 L29.0 294.6 L30.9 295.0 L32.8 295.3 L34.7 295.4 L36.6 295.4 L38.5 295.2 L40.4 294.9 L42.2 294.4 L44.0 293.8 L45.7 293.1 L47.4 292.2 L48.9 291.2 L50.4 290.0 L51.8 288.8 L53.0 287.5 L54.2 286.0 L55.2 284.5 L56.1 282.9 L56.9 281.3 L57.5 279.6 L58.0 277.9 L58.4 276.1 L58.6 274.3 L58.6 272.6 L58.5 270.8 L58.3 269.0 L58.0 267.3 L57.5 265.6 L56.9 264.0 L56.1 262.4 L55.2 260.9 L54.3 259.5 L53.2 258.2 L52.0 256.9 L50.7 255.8 L49.3 254.8 L47.9 253.9 L46.4 253.1 L44.9 252.4 L43.3 251.9 L41.7 251.5 L40.0 251.2 L38.4 251.1 L36.7 251.1 L35.1 251.2 L33.5 251.5 L31.9 251.9 L30.4 252.4 L28.9 253.0 L27.5 253.7 L26.1 254.6 L24.8 255.5 L23.6 256.6 L22.5 257.7 L21.5 258.9 L20.6 260.2 L19.8 261.5 L19.2 262.9 L18.6 264.4 L18.2 265.8 L17.8 267.3 L17.6 268.9 L17.6 270.4 L17.6 271.9 L17.8 273.4 L18.1 274.9 L18.5 276.3 L19.0 277.7 L19.6 279.0 L20.3 280.3 L21.1 281.5 L22.0 282.7 L23.0 283.7 L24.1 284.7 L25.3 285.6 L26.5 286.4 L27.7 287.0 L29.0 287.6 L30.3 288.1 L31.7 288.4 L33.1 288.7 L34.5 288.8 L35.8 288.8 L37.2 288.7 L38.6 288.5 L39.9 288.2 L41.2 287.8 L42.4 287.3 L43.6 286.7 L44.8 286.0 L45.9 285.2 L46.9 284.4 L47.8 283.4 L48.6 282.4 L49.4 281.4 L50.1 280.3 L50.6 279.1 L51.1 277.9 L51.5 276.7 L51.8 275.5 L52.0 274.2 L52.0 272.9 L52.0 271.7 L51.9 270.5 L51.7 269.2 L51.3 268.1 L50.9 266.9 L50.4 265.8 L49.8 264.7 L49.2 263.7 L48.4 262.8 L47.6 261.9 L46.8 261.1 L45.8 260.4 L44.9 259.7 L43.9 259.2 L42.8 258.7 L41.7 258.3 L40.6 258.0 L39.5 257.8 L38.4 257.7 L37.2 257.7 L36.1 257.7 L35.0 257.9 L34.0 258.1 L32.9 258.4 L31.9 258.8 L30.9 259.3 L30.0 259.9 L29.1 260.5 L28.3 261.2 L27.6 261.9 L26.9 262.7 L26.3 263.6 L25.7 264.5 L25.3 265.4 L24.9 266.3 L24.6 267.3 L24.4 268.3 L24.2 269.3 L24.2 270.3 L24.2 271.3 L24.3 272.2 L24.4 273.2 L24.7 274.1 L25.0 275.0 L25.4 275.9 L25.9 276.7 L26.4 277.5 L26.9 278.3 L27.6 279.0 L28.3 279.6 L29.0 280.1 L29.7 280.6 L30.5 281.1 L31.3 281.5 L32.2 281.8 L33.0 282.0 L33.9 282.1 L34.7 282.2 L35.6 282.2 L36.5 282.2 L37.3 282.1 L38.1 281.9 L38.9 281.6 L39.7 281.3 L40.4 281.0 L41.1 280.5 L41.8 280.1 L42.4 279.6 L42.9 279.0 L43.5 278.4 L43.9 277.8 L44.3 277.1 L44.7 276.4 L44.9 275.7 L45.2 275.0 L45.3 274.2 L45.4 273.5 L45.5 272.8 L45.4 272.0 L45.4 271.3 L45.2 270.6 L45.0 269.9 L44.8 269.3 L44.5 268.7 L44.2 268.1 L43.8 267.5 L43.4 267.0 L42.9 266.5 L42.4 266.0 L41.9 265.6 L41.4 265.3 L40.8 265.0 L40.2 264.7 L39.6 264.5 L39.0 264.4 L38.4 264.3 L37.8 264.2 L37.2 264.2 L36.6 264.3 L36.0 264.4 L35.5 264.5 L34.9 264.7 L34.4 264.9 L33.9 265.2 L33.4 265.5 L33.0 265.8 L32.6 266.2 L32.2 266.6 L31.9 267.0 L31.6 267.4 L31.4 267.9 L31.1 268.3 L31.0 268.8 L30.8 269.3 L30.8 269.8 L30.7 270.2 L30.7 270.7 L30.7 271.2 L30.8 271.6 L30.9 272.1 L31.1 272.5 L31.2 272.9 L31.4 273.3 L31.7 273.7 L31.9 274.0 L32.2 274.3 L32.5 274.6 L32.8 274.9 L33.1 275.1 L33.5 275.3 L33.8 275.4 L34.2 275.5 L34.5 275.6 L34.9 275.7 L35.3 275.7 L35.6 275.7 L35.9 275.7 L36.3 275.6 L36.6 275.6 L36.9 275.4 L37.2 275.3 L37.5 275.2 L37.7 275.0 L38.0 274.8 L38.2 274.6 L38.3 274.4 L38.5 274.2 L38.7 273.9 L38.8 273.7 L38.9 273.4 L38.9 273.2 L39.0 273.0 L39.0 272.7 L39.0 272.5 L39.0 272.3 L38.9 272.0 L38.9 271.8 L38.8 271.6 L38.7 271.4 L38.6 271.3 L38.5 271.1 L38.4 271.0 L38.2 270.9 L38.1 270.8 L38.0 270.7 L37.8 270.6 L37.7 270.6 L37.5 270.5 L37.4 270.5 L37.2 270.5 L37.1 270.5" fill="none" stroke="#555" stroke-width="1.15" stroke-linejoin="miter"/><path d="M109.3 243.2 L115.6 259.6 L133.0 256.9 L122.0 270.6 L133.0 284.3 L115.6 281.6 L109.3 298.0 L103.0 281.6 L85.6 284.3 L96.6 270.6 L85.6 256.9 L103.0 259.6 Z" fill="none" stroke="#555" stroke-width="1.15" stroke-linejoin="miter"/><path d="M170.0 246.2 L207.8 246.2 L190.3 294.6 L153.0 294.6 Z" fill="none" stroke="#555" stroke-width="1.15" stroke-linejoin="miter"/><circle cx="38.5" cy="350.2" r="27.3" fill="none" stroke="#555" stroke-width="1.15" stroke-linejoin="miter"/><path d="M180.3 322.3 L191.0 340.0 L169.6 340.0 Z" fill="none" stroke="#555" stroke-width="1.15" stroke-linejoin="miter"/></svg>
<span class="c shl" style="left:1407.5px;top:184px;">箭头</span>
<span class="c shl" style="left:1478.3px;top:184px;">箭头1</span>
<span class="c shl" style="left:1549.3px;top:184px;">箭头2</span>
<span class="c shl" style="left:1407.5px;top:263.3px;">同心圆</span>
<span class="c shl" style="left:1478.3px;top:263.3px;">十字</span>
<span class="c shl" style="left:1549.3px;top:263.3px;">十字箭头</span>
<span class="c shl" style="left:1407.5px;top:342px;">双箭头</span>
<span class="c shl" style="left:1478.3px;top:342px;">五角星</span>
<span class="c shl" style="left:1549.3px;top:342px;">心形</span>
<span class="c shl" style="left:1407.5px;top:421.3px;">螺旋线</span>
<span class="c shl" style="left:1478.3px;top:421.3px;">六角星</span>
<span class="c shl" style="left:1549.3px;top:421.3px;">平行四边形</span>
<div class="a" style="left:1375px;top:455.3px;width:218.5px;height:33.7px;background:#0a7eca;border-radius:4px 4px 0 0"></div>
<span class="l th" style="left:1378px;top:472.5px;letter-spacing:.5px">加工工艺</span>
<span class="c th" style="left:1463.2px;top:472.5px;">速度</span>
<span class="c th" style="left:1521px;top:472.5px;">功率</span>
<span class="c th" style="left:1570px;top:472.5px;">输出</span>
<div class="a" style="left:1375px;top:489px;width:218.5px;height:33px;background:#e9e9e9"></div>
<div class="a" style="left:1377.5px;top:498.5px;width:15px;height:15px;border-radius:2px;background:#fea90d"></div>
<span class="l td" style="left:1398px;top:506.2px;">浅雕</span>
<span class="c td" style="left:1463.2px;top:506.2px;color:#7d7d7d;font-size:12.5px;letter-spacing:.3px">500.0</span>
<span class="c td" style="left:1521px;top:506.2px;color:#7d7d7d;font-size:12.5px;letter-spacing:.3px">20.0</span>
<svg class="a" style="left:1560px;top:499.2px" width="20" height="14" viewBox="0 0 20 14" ><path d="M1 7 Q10 -3.5 19 7 Q10 17.5 1 7 Z" fill="none" stroke="#111" stroke-width="1.5"/><circle cx="10" cy="7" r="3.9" fill="none" stroke="#111" stroke-width="1.5"/><circle cx="10" cy="7" r="1.2" fill="#fff"/></svg>
<div class="a" style="left:1377.5px;top:531.8px;width:15px;height:15px;border-radius:2px;background:#000"></div>
<span class="l td" style="left:1398px;top:539.5px;">切割</span>
<span class="c td" style="left:1463.2px;top:539.5px;color:#111;font-size:12.5px;letter-spacing:.3px">18.0</span>
<span class="c td" style="left:1521px;top:539.5px;color:#111;font-size:12.5px;letter-spacing:.3px">55.0</span>
<svg class="a" style="left:1560px;top:532.5px" width="20" height="14" viewBox="0 0 20 14" ><path d="M1 7 Q10 -3.5 19 7 Q10 17.5 1 7 Z" fill="none" stroke="#111" stroke-width="1.5"/><circle cx="10" cy="7" r="3.9" fill="none" stroke="#111" stroke-width="1.5"/><circle cx="10" cy="7" r="1.2" fill="#fff"/></svg>
<div class="a" style="left:1377.5px;top:565.0px;width:15px;height:15px;border-radius:2px;background:#000"></div>
<span class="l td" style="left:1398px;top:572.7px;">图片</span>
<span class="c td" style="left:1463.2px;top:572.7px;color:#111;font-size:12.5px;letter-spacing:.3px">500.0</span>
<span class="c td" style="left:1521px;top:572.7px;color:#111;font-size:12.5px;letter-spacing:.3px">20.0</span>
<svg class="a" style="left:1560px;top:565.7px" width="20" height="14" viewBox="0 0 20 14" ><path d="M1 7 Q10 -3.5 19 7 Q10 17.5 1 7 Z" fill="none" stroke="#111" stroke-width="1.5"/><circle cx="10" cy="7" r="3.9" fill="none" stroke="#111" stroke-width="1.5"/><circle cx="10" cy="7" r="1.2" fill="#fff"/></svg>
<div class="a" style="left:1425.5px;top:705px;width:107px;height:107px;border-radius:54px;background:#0a7eca"></div>
<div class="a" style="left:1429.5px;top:709px;width:99px;height:99px;border-radius:50px;background:#fff"></div>
<div class="a" style="left:1433.5px;top:713px;width:91px;height:91px;border-radius:46px;background:#0a7eca"></div>
<span class="c " style="left:1479px;top:759.3px;font-size:24px;color:#fff;font-weight:500">开始</span>
<div class="a" style="left:1375px;top:824.5px;width:217px;height:24.5px;background:#d6d6d6;border-radius:3px"></div>
<div class="a w" style="left:1377px;top:826.5px;width:159px;height:20.5px;border-radius:3px"></div>
<svg class="a" style="left:1429px;top:830px" width="14" height="14" viewBox="0 0 14 14" ><circle cx="7" cy="7" r="5.6" fill="none" stroke="#e8872a" stroke-width="1.4"/><path d="M4.8 4.8 L9.2 9.2 M9.2 4.8 L4.8 9.2" stroke="#e8872a" stroke-width="1.4"/></svg>
<span class="l " style="left:1448px;top:837px;font-size:12px;color:#e8872a;letter-spacing:.4px;font-weight:500">未连接</span>
<span class="c " style="left:1564px;top:837px;font-size:12px;color:#111;font-weight:500">切换</span>
<div class="a" style="left:243px;top:104px;width:1126px;height:718px;background:#f0f0f0;border:1px solid #646464"></div>
<div class="a w" style="left:244px;top:105px;width:1124px;height:25px"></div>
<svg class="a" style="left:250.5px;top:110.5px" width="14" height="13" viewBox="0 0 14 13" ><rect x="0.5" y="0.5" width="13" height="12" rx="1.5" fill="#2f9fd6"/><rect x="0.5" y="9" width="13" height="3.5" rx="1" fill="#2a86b8"/><path d="M4.6 2.5 L3.6 9 H10.4" fill="none" stroke="#fff" stroke-width="1.7"/><rect x="7.2" y="2.6" width="3.6" height="3.2" fill="#b9dc6a"/></svg>
<span class="l " style="left:267.5px;top:117.3px;font-size:10px;color:#222;letter-spacing:-.1px">轮廓提取</span>
<svg class="a" style="left:1350.5px;top:112px" width="10" height="10" viewBox="0 0 10 10" ><path d="M1 1 L9 9 M9 1 L1 9" stroke="#222" stroke-width="1.1"/></svg>
<div class="a w" style="left:254.5px;top:140px;width:261.5px;height:670.5px;border-radius:8px"></div>
<div class="a w" style="left:524px;top:140px;width:835px;height:670.5px;border-radius:8px"></div>
<div class="a w" style="left:522px;top:154.5px;width:837.5px;height:641.5px"></div>
<span class="l f14" style="left:268.5px;top:164.5px;">阈值</span>
<div class="a w" style="left:268.5px;top:184.5px;width:10.5px;height:10.5px;border:1px solid #333"></div>
<span class="l f12" style="left:284px;top:191.5px;">自动</span>
<span class="l f12" style="left:268.8px;top:216px;">暗部界限</span>
<svg class="a" style="left:323.5px;top:207.8px" width="13" height="13" viewBox="0 0 13 13" ><circle cx="6.5" cy="6.5" r="5.4" fill="none" stroke="#c9c9c9" stroke-width="1"/><path d="M6.5 5.8 V9.6" stroke="#c9c9c9" stroke-width="1.1"/><circle cx="6.5" cy="3.9" r="0.7" fill="#c9c9c9"/></svg>
<span class="l f12" style="left:396.3px;top:216px;">亮部界限</span>
<svg class="a" style="left:455.5px;top:207.8px" width="13" height="13" viewBox="0 0 13 13" ><circle cx="6.5" cy="6.5" r="5.4" fill="none" stroke="#c9c9c9" stroke-width="1"/><path d="M6.5 5.8 V9.6" stroke="#c9c9c9" stroke-width="1.1"/><circle cx="6.5" cy="3.9" r="0.7" fill="#c9c9c9"/></svg>
<div class="inp" style="left:268.5px;top:228px;width:106.5px;height:20px;border-color:#444;font-size:13px;padding-left:3px;padding-top:1.5px">0</div><svg class="a" style="left:364.5px;top:228px" width="6" height="20" viewBox="0 0 6 20" ><path d="M0.7 6.6 L3 3.8 L5.3 6.6 Z M0.7 13.6 L3 16.4 L5.3 13.6 Z" fill="#111"/></svg>
<div class="a" style="left:380px;top:237.5px;width:12px;height:1px;background:#c4c4c4"></div>
<div class="inp" style="left:396.5px;top:228px;width:106px;height:20px;border-color:#444;font-size:13px;padding-left:3px;padding-top:1.5px">128</div><svg class="a" style="left:492.0px;top:228px" width="6" height="20" viewBox="0 0 6 20" ><path d="M0.7 6.6 L3 3.8 L5.3 6.6 Z M0.7 13.6 L3 16.4 L5.3 13.6 Z" fill="#111"/></svg>
<div class="a" style="left:271px;top:255.5px;width:231.5px;height:4px;border-radius:2px;background:#c8c8c8"></div>
<div class="a" style="left:274px;top:255.5px;width:116px;height:4px;background:#2f86dd"></div>
<div class="a w" style="left:268.5px;top:253.5px;width:10px;height:9px;border:1px solid #a9a9a9;border-radius:2px"></div>
<div class="a w" style="left:385.5px;top:253.5px;width:10px;height:9px;border:1px solid #a9a9a9;border-radius:2px"></div>
<span class="l f12" style="left:268.8px;top:277.6px;font-size:11.5px">暗</span>
<span class="l f12" style="left:490.3px;top:277.6px;font-size:11.5px">亮</span>
<span class="l f14" style="left:268.5px;top:316px;">优化</span>
<span class="l f12" style="left:268.8px;top:342px;">忽略小于</span>
<svg class="a" style="left:323.5px;top:333.5px" width="13" height="13" viewBox="0 0 13 13" ><circle cx="6.5" cy="6.5" r="5.4" fill="none" stroke="#c9c9c9" stroke-width="1"/><path d="M6.5 5.8 V9.6" stroke="#c9c9c9" stroke-width="1.1"/><circle cx="6.5" cy="3.9" r="0.7" fill="#c9c9c9"/></svg>
<div class="inp" style="left:388.5px;top:330.5px;width:114px;height:20.5px;border-color:#444;font-size:13px;padding-left:3px;padding-top:1.5px">0</div><svg class="a" style="left:492.0px;top:330.5px" width="6" height="20.5" viewBox="0 0 6 20.5" ><path d="M0.7 6.6 L3 3.8 L5.3 6.6 Z M0.7 14.1 L3 16.9 L5.3 14.1 Z" fill="#111"/></svg>
<div class="a" style="left:276px;top:364px;width:226.5px;height:1px;background:#d2d2d2"></div>
<div class="a w" style="left:268.3px;top:360.5px;width:10px;height:9px;border-radius:5px;border:1.2px solid #2b8bd0"></div>
<span class="l f12" style="left:268.8px;top:390.9px;">曲线平滑</span>
<div class="inp" style="left:388.5px;top:379px;width:114px;height:20.5px;border-color:#444;font-size:13px;padding-left:3px;padding-top:1.5px">9</div><svg class="a" style="left:492.0px;top:379px" width="6" height="20.5" viewBox="0 0 6 20.5" ><path d="M0.7 6.6 L3 3.8 L5.3 6.6 Z M0.7 14.1 L3 16.9 L5.3 14.1 Z" fill="#111"/></svg>
<div class="a" style="left:268.5px;top:412.3px;width:225px;height:2px;background:#2b87c8"></div>
<div class="a w" style="left:492.5px;top:408.8px;width:10px;height:9px;border-radius:5px;border:1.2px solid #2b8bd0"></div>
<span class="l f14" style="left:268.5px;top:453.8px;">框选</span>
<svg class="a" style="left:303.5px;top:446.1px" width="13" height="13" viewBox="0 0 13 13" ><circle cx="6.5" cy="6.5" r="5.4" fill="none" stroke="#c9c9c9" stroke-width="1"/><path d="M6.5 5.8 V9.6" stroke="#c9c9c9" stroke-width="1.1"/><circle cx="6.5" cy="3.9" r="0.7" fill="#c9c9c9"/></svg>
<div class="a w" style="left:268.5px;top:468px;width:234px;height:28.5px;border:1px solid #cfcfcf;border-radius:4px"></div>
<span class="c f12" style="left:385px;top:483.4px;letter-spacing:.4px">消除边框</span>
<div class="a" style="left:261px;top:778px;width:60px;height:26.5px;border-radius:4px;background:#1e78c2"></div>
<span class="c " style="left:291px;top:792px;font-size:12px;color:#fff;font-weight:bold;letter-spacing:.4px">提取轮廓</span>
<svg class="a" style="left:690px;top:240px" width="470" height="440" viewBox="0 0 470 440" ><polygon points="234.0,14.3 302.0,148.0 452.2,170.3 343.3,277.0 367.7,427.0 235.2,357.0 100.0,427.1 124.3,274.6 17.6,170.5 166.7,147.7" fill="#000" stroke="#000" stroke-width="0.8" stroke-linejoin="round"/><polygon points="234.0,14.3 302.0,148.0 452.2,170.3 343.3,277.0 367.7,427.0 235.2,357.0 100.0,427.1 124.3,274.6 17.6,170.5 166.7,147.7" fill="none" stroke="#e060f0" stroke-opacity=".6" stroke-width="1.4" stroke-dasharray="2.2 1.2" stroke-linejoin="round"/></svg>
</body></html>
